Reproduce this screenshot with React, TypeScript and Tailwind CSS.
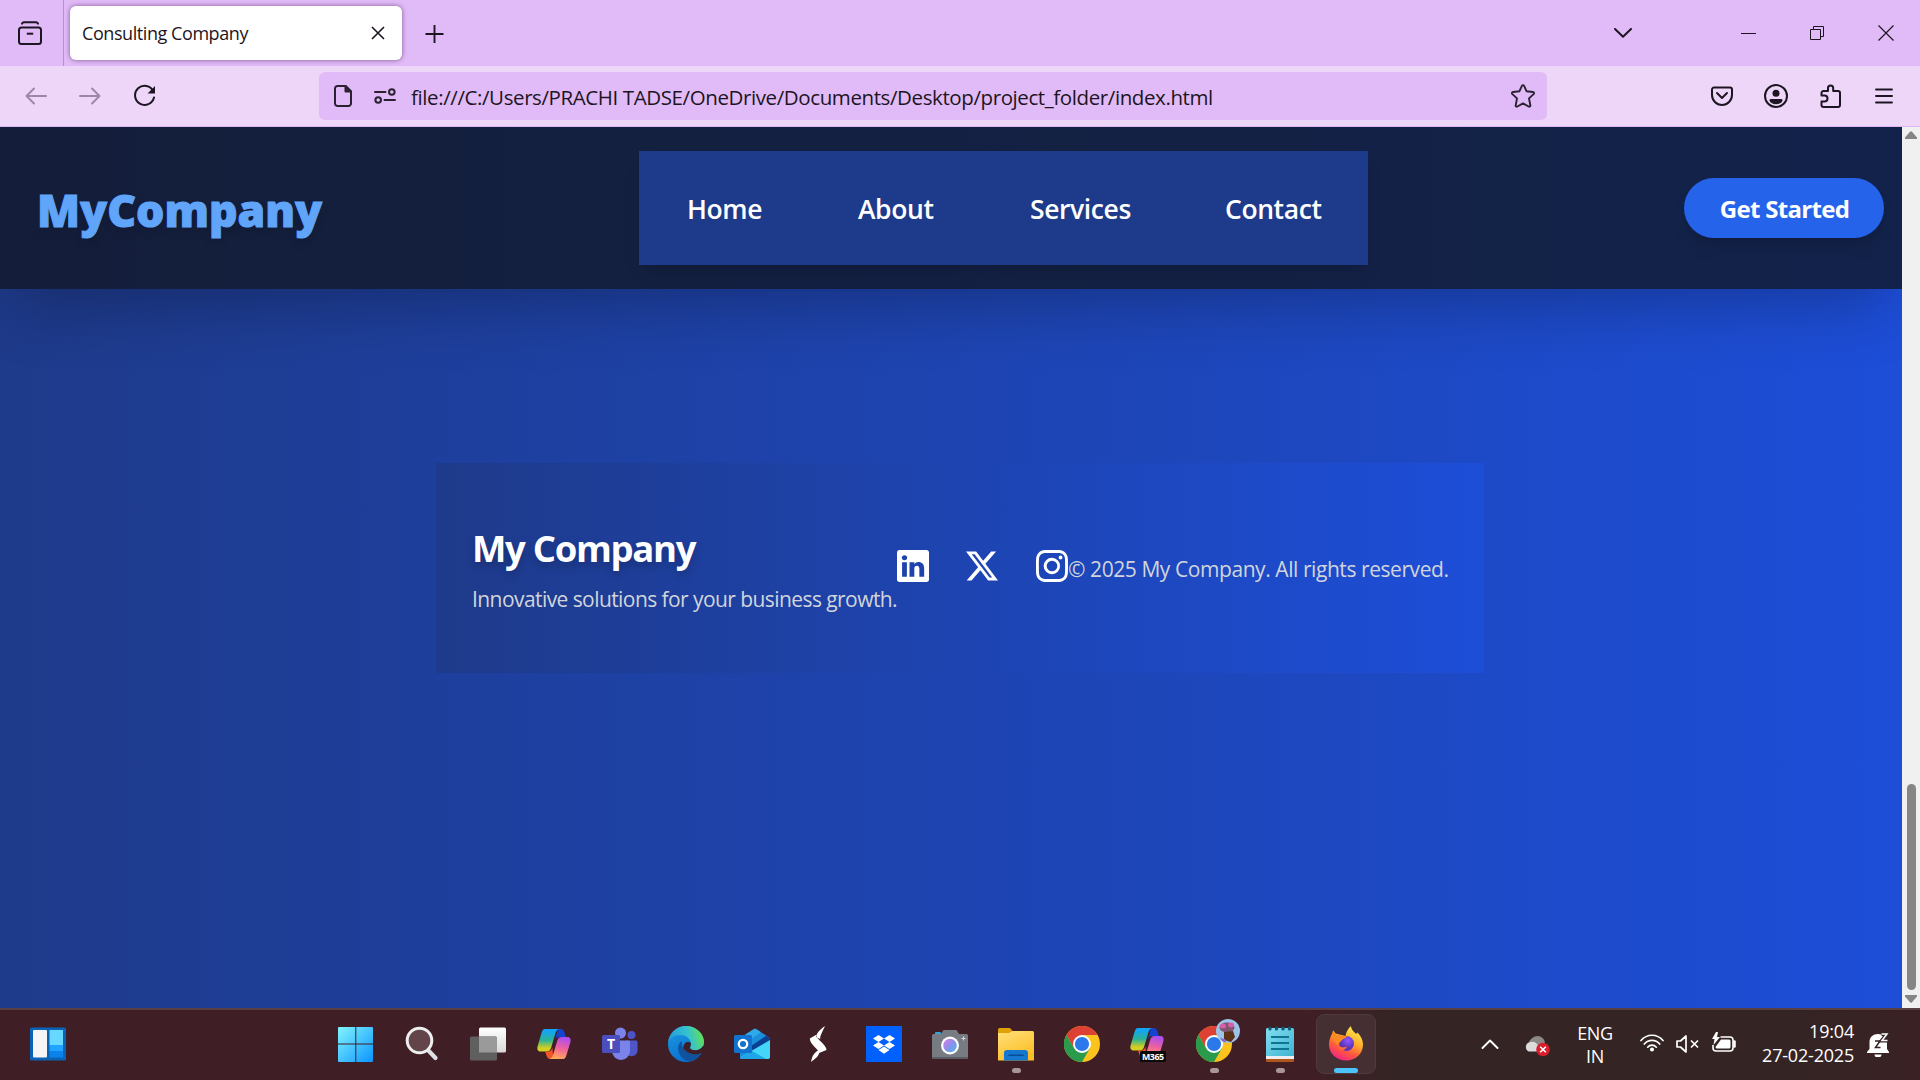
import React from "react";
import { BsLinkedin, BsTwitterX, BsInstagram } from "react-icons/bs";

const INK = "#1d1522";

/* ---------- Browser chrome ---------- */

function TabStrip() {
  return (
    <div className="flex h-[66px] items-center bg-[#e1bbf7] text-[#1d1522]">
      <div className="flex h-full w-16 items-center justify-center border-r border-[#b491c8] pr-[3px]">
        <svg width="24" height="24" viewBox="0 0 24 24" fill="none" stroke={INK} strokeWidth="2" strokeLinecap="round">
          <path d="M4 2.600C4.400 1.600 5 1.300 6 1.300h12c1 0 1.600.3 2 1.300" />
          <rect x="1" y="6.500" width="22" height="16.500" rx="2.500" />
          <path d="M9.800 12.700h4.400" strokeLinecap="square" />
        </svg>
      </div>
      <div className="ml-1.5 flex h-[54px] w-[332px] items-center justify-between rounded-md bg-white pl-3 pr-[17px] shadow-[0_0_5px_rgba(60,20,80,0.6)]">
        <span className="whitespace-nowrap font-['Open_Sans',sans-serif] text-[18px] leading-6 tracking-[-0.43px]">Consulting Company</span>
        <svg width="14" height="14" viewBox="0 0 14 14" stroke={INK} strokeWidth="1.600">
          <path d="M1 1l12 12M13 1L1 13" />
        </svg>
      </div>
      <svg className="ml-[23px] mt-[2px]" width="19" height="18" viewBox="0 0 19 18" stroke={INK} strokeWidth="1.900">
        <path d="M9.500 0v18M.5 9h18" />
      </svg>
      <svg className="ml-auto" width="18" height="10" viewBox="0 0 18 10" fill="none" stroke={INK} strokeWidth="2" strokeLinecap="round" strokeLinejoin="round">
        <path d="M1 1l8 7.800L17 1" />
      </svg>
      <div className="ml-[109px] h-px w-[15px] bg-[#1d1522]" />
      <svg className="ml-[54px]" width="14" height="14" viewBox="0 0 14 14" fill="none" stroke={INK}>
        <path d="M.5 3.500h10v10H.5zM3.500 3.500v-3h10v10h-3" />
      </svg>
      <svg className="ml-[54px] mr-[26px]" width="16" height="16" viewBox="0 0 16 16" stroke={INK} strokeWidth="1.200">
        <path d="M.5 .5l15 15M15.500 .5L.5 15.500" />
      </svg>
    </div>
  );
}

function Toolbar() {
  return (
    <div className="flex h-[61px] items-center border-b border-[#dfb6f5] bg-[#eed6f9]">
      <svg className="ml-[25px]" width="22" height="18" viewBox="0 0 22 18" fill="none" stroke="#9c87a7" strokeWidth="2" strokeLinecap="round" strokeLinejoin="round">
        <path d="M9 1.500L1.500 9 9 16.500M1.500 9H21" />
      </svg>
      <svg className="ml-8" width="22" height="18" viewBox="0 0 22 18" fill="none" stroke="#9c87a7" strokeWidth="2" strokeLinecap="round" strokeLinejoin="round">
        <path d="M13 1.500L20.500 9 13 16.500M20.500 9H1" />
      </svg>
      <svg className="ml-8" width="24" height="24" viewBox="0 0 24 24" fill="none">
        <path d="M20.300 7.200A9.600 9.600 0 1 0 21 13.500" stroke={INK} strokeWidth="2" strokeLinecap="round" />
        <path d="M22 2v7.400h-7.400z" fill={INK} />
      </svg>
      <div className="ml-[162px] flex h-12 w-[1228px] items-center rounded-md bg-[#e1bbf7] pl-[15px] pr-3">
        <svg width="18" height="22" viewBox="0 0 18 22" fill="none" stroke="#2b2131" strokeWidth="2" strokeLinejoin="round">
          <path d="M3.500 1H11.500L17 6.500V18.500a2.500 2.500 0 0 1-2.500 2.500h-11A2.500 2.500 0 0 1 1 18.500v-15A2.500 2.500 0 0 1 3.500 1z" />
          <path d="M11.500 1v5.500H17z" fill="#2b2131" />
        </svg>
        <svg className="ml-[22px]" width="22" height="16" viewBox="0 0 22 16" fill="none" stroke="#2b2131" strokeWidth="2" strokeLinecap="round">
          <path d="M1 4h10.500M10.500 12H21" />
          <circle cx="17.800" cy="4" r="2.800" />
          <circle cx="4.200" cy="12" r="2.800" />
        </svg>
        <span className="ml-[15px] whitespace-nowrap pt-0.5 font-['Open_Sans',sans-serif] text-[20.500px] leading-7 tracking-[-0.4px] text-[#1d1522]">
          file:///C:/Users/PRACHI TADSE/OneDrive/Documents/Desktop/project_folder/index.html
        </span>
        <svg className="ml-auto" width="24" height="24" viewBox="0 0 24 24" fill="none" stroke="#2b2131" strokeWidth="1.900" strokeLinejoin="round">
          <path d="M10.900 1.900c.5-1 1.700-1 2.200 0l2.400 5.300 6.400.8c1.200.2 1.500 1.300.7 2.100l-4.600 4.300 1.300 6.900c.2 1.100-.8 1.700-1.700 1.200L12 19.400l-5.600 3.100c-.9.5-1.900-.1-1.700-1.200L6 14.400 1.400 10.100c-.8-.8-.5-1.900.7-2.100l6.400-.8z" />
        </svg>
      </div>
      <svg className="ml-[164px]" width="22" height="20" viewBox="0 0 22 20" fill="none" stroke={INK} strokeWidth="2" strokeLinecap="round" strokeLinejoin="round">
        <path d="M3 1.500h16a2 2 0 0 1 2 2V9a10 10 0 0 1-20 0V3.500a2 2 0 0 1 2-2z" />
        <path d="M6 7l5 5 5-5" />
      </svg>
      <svg className="ml-[31px]" width="24" height="24" viewBox="0 0 24 24" fill="none">
        <circle cx="12" cy="12" r="11" stroke={INK} strokeWidth="2" />
        <circle cx="12" cy="9.300" r="3.500" fill={INK} />
        <path d="M7 15h10a1.500 1.500 0 0 1 1.500 1.700C17.500 19 15 20.200 12 20.200S6.500 19 5.500 16.700A1.500 1.500 0 0 1 7 15z" fill={INK} />
      </svg>
      <svg className="ml-8" width="22" height="24" viewBox="0 0 22 24" fill="none" stroke={INK} strokeWidth="2" strokeLinejoin="round">
        <path d="M1.500 11.500V9a2 2 0 0 1 2-2H8V4a2.600 2.600 0 0 1 5.200 0v3H18a2 2 0 0 1 2 2v12a2 2 0 0 1-2 2H3.500a2 2 0 0 1-2-2v-3.500h3a3 3 0 0 0 0-6z" />
      </svg>
      <svg className="ml-[33px]" width="18" height="16" viewBox="0 0 18 16" stroke={INK} strokeWidth="1.900" strokeLinecap="round">
        <path d="M1 1.500h16M1 8h16M1 14.500h16" />
      </svg>
    </div>
  );
}

/* ---------- Page ---------- */

function Header() {
  return (
    <header className="flex h-[162px] shrink-0 items-center justify-between bg-[#111827]/80 pl-[37px] pr-[18px] shadow-[0_31px_62px_-15px_rgba(0,0,0,0.25)]">
      <div className="w-[602px] pt-[4px] font-['Noto_Sans',sans-serif] text-[44.500px] font-black leading-none text-[#60a5fa] [-webkit-text-stroke:1px_#60a5fa] [text-shadow:0_5px_8px_rgba(0,0,0,0.15)]">MyCompany</div>
      <nav className="flex h-[114px] w-[729px] items-center gap-24 whitespace-nowrap bg-[#1e3a8a] pl-12 pt-0.5 font-['Open_Sans',sans-serif] text-[26.500px] font-semibold leading-10 tracking-[-0.4px] text-white shadow-[0_12px_19px_-4px_rgba(0,0,0,0.1),0_5px_8px_-5px_rgba(0,0,0,0.1)]">
        <a className="w-[75px]">Home</a>
        <a className="w-[76px]">About</a>
        <a className="w-[99px]">Services</a>
        <a>Contact</a>
      </nav>
      <button className="ml-auto h-[60px] w-[200px] whitespace-nowrap rounded-full bg-[#2563eb] pl-px pt-0.5 font-['Open_Sans',sans-serif] text-[24px] font-bold tracking-[-0.7px] text-white shadow-[0_12px_19px_-4px_rgba(0,0,0,0.1),0_5px_8px_-5px_rgba(0,0,0,0.1)]">Get Started</button>
    </header>
  );
}

function Footer() {
  return (
    <footer className="ml-[436px] mt-[174px] flex h-[210px] w-[1048px] items-center whitespace-nowrap bg-[linear-gradient(to_right,#1e3a8a,#1d4ed8)] px-9 font-['Open_Sans',sans-serif]">
      <div className="w-[425px] pt-1.5">
        <h2 className="text-[36.500px] font-bold leading-[45px] tracking-[-1.3px] text-white [text-shadow:0_5px_8px_rgba(0,0,0,0.2)]">My Company</h2>
        <p className="mt-[11px] text-[21px] leading-[34px] tracking-[-0.57px] text-[#d1d5db]">Innovative solutions for your business growth.</p>
      </div>
      <div className="mb-1 flex gap-[37px] text-[32px] text-white">
        <BsLinkedin />
        <BsTwitterX />
        <BsInstagram className="ml-px" />
      </div>
      <p className="pt-0.5 text-[21px] leading-[34px] tracking-[-0.43px] text-[#d1d5db]">© 2025 My Company. All rights reserved.</p>
    </footer>
  );
}

function ScrollBar() {
  return (
    <div className="flex h-full w-[18px] flex-col items-center bg-[#f0f0f0]">
      <svg className="mt-1" width="12" height="8" viewBox="0 0 12 8"><path d="M5 .8q1-1.200 2 0L12 6.500V8H0V6.500z" fill="#858585" /></svg>
      <div className="mb-[5px] mt-auto h-[206px] w-[9px] rounded-full bg-[#858585]" />
      <svg className="mb-[5px]" width="12" height="8" viewBox="0 0 12 8"><path d="M5 7.200q1 1.200 2 0L12 1.500V0H0V1.500z" fill="#858585" /></svg>
    </div>
  );
}

/* ---------- Taskbar icons, each in a 36px box ---------- */

function Box({ children }: { children: React.ReactNode }) {
  return <svg width="36" height="36" viewBox="0 0 36 36">{children}</svg>;
}

const Widgets = () => (
  <Box>
    <rect y="1.500" width="36" height="33" rx="1.500" fill="#0b63b5" />
    <rect x="3" y="4" width="14" height="27.500" rx="1" fill="#f6f6f6" />
    <rect x="19.500" y="4" width="13.500" height="15" fill="#67d8ff" />
    <rect x="19.500" y="19" width="13.500" height="6" fill="#1fa4ff" />
    <rect x="19.500" y="25" width="13.500" height="6.500" fill="#0a84ea" />
  </Box>
);
const Start = () => (
  <Box>
    <defs><linearGradient id="win" x1="0" y1="0" x2="36" y2="36" gradientUnits="userSpaceOnUse"><stop stopColor="#83f6ff" /><stop offset="1" stopColor="#0a93ff" /></linearGradient></defs>
    <path d="M1 1h16.300v16.500H0V2Q0 1 1 1zM18.300 1H34q1 0 1 1v15.500H18.300zM0 18.500h17.300V36H1Q0 36 0 35zM18.300 18.500H35V35q0 1-1 1H18.300z" fill="url(#win)" />
  </Box>
);
const Search = () => (
  <Box>
    <path d="M23 23l8.500 9" stroke="#dcdfe3" strokeWidth="4.200" strokeLinecap="round" />
    <circle cx="15.500" cy="14.500" r="12.300" fill="#634549" stroke="#eceef0" strokeWidth="3" />
  </Box>
);
const TaskView = () => (
  <Box>
    <defs><linearGradient id="tv" x2="0" y2="1"><stop stopColor="#fff" /><stop offset="1" stopColor="#d8d8d8" /></linearGradient></defs>
    <rect x="9" y="1.500" width="27" height="25" rx="1.500" fill="url(#tv)" />
    <rect y="10.500" width="27" height="24" rx="1.500" fill="#5f5f5f" />
    <path d="M9 10.500h16.500a1.500 1.500 0 0 1 1.500 1.500v14.500H9z" fill="#9a9a9a" />
  </Box>
);
const CopilotShape = () => (
  <>
    <defs>
      <linearGradient id="cpA" x2="0" y2="1"><stop offset=".1" stopColor="#12a5f5" /><stop offset=".5" stopColor="#2cb396" /><stop offset=".85" stopColor="#d4cf20" /></linearGradient>
      <linearGradient id="cpB" x1=".5" x2=".3" y2="1"><stop stopColor="#ab4df0" /><stop offset=".5" stopColor="#f2639a" /><stop offset="1" stopColor="#ffad55" /></linearGradient>
    </defs>
    <path d="M22 3h2.500c2.500 0 3.500 1.800 4.200 4l1.300 4h-7c-2 0-3.200 1-4 3z" fill="#1543cf" />
    <path d="M9 3h14c-2.200.8-3 2.500-3.800 5l-4 13.500c-.8 2.700-2 4-4.700 4H4.500C1.500 25.500.8 23 1.700 20L5.500 7C6.400 4.200 7 3 9 3z" fill="url(#cpA)" />
    <path d="M9 25.500h3c2.500 0 3.700-1.500 4.400-4l.6 7.500c0 2-.3 4-2.500 4-2.700 0-3.500-1.800-4.200-4z" fill="#f4562a" />
    <path d="M27 33H13.500c2.200-.8 3-2.500 3.800-5l4-13.500c.8-2.500 2-3.500 4.700-3.500h5.500c3 0 3.700 2.500 2.800 5.500L30.500 29c-.8 2.800-1.500 4-3.500 4z" fill="url(#cpB)" />
  </>
);
const Copilot = () => <Box><CopilotShape /></Box>;
const Teams = () => (
  <Box>
    <circle cx="29.500" cy="9" r="4" fill="#4d52c4" />
    <circle cx="18.500" cy="7" r="5.500" fill="#7b83eb" />
    <path d="M24 14.500h10q1.500 0 1.500 1.500v8.500a6 6 0 0 1-11.500 2z" fill="#4f56c7" />
    <path d="M11 14.500h15.500q1.500 0 1.500 1.500v9a9 9 0 0 1-18 0z" fill="#7b83eb" />
    <rect y="9" width="18" height="18" rx="1.500" fill="#4a4fbd" />
    <text x="9" y="23.200" textAnchor="middle" fill="#fff" fontSize="14" fontWeight="700" fontFamily="Open Sans">T</text>
  </Box>
);
const Edge = () => (
  <Box>
    <defs>
      <linearGradient id="edA" x2="1" y1=".2"><stop stopColor="#249fd9" /><stop offset=".5" stopColor="#35c1cf" /><stop offset="1" stopColor="#6be83c" /></linearGradient>
      <linearGradient id="edB" x2=".4" y2="1"><stop stopColor="#1b9ee0" /><stop offset="1" stopColor="#0c6fd0" /></linearGradient>
    </defs>
    <circle cx="18" cy="18" r="18" fill="url(#edB)" />
    <path d="M0 17C1 7 9 0 18 0c10.500 0 18 8 18 15.500 0 5.500-4 9-9 9-3.500 0-5.500-1-5.500-2.500 0-1.200 1.500-1.500 1.500-4.500 0-3.500-4-8.500-11-8.500C6 9 1.500 12.500 0 17z" fill="url(#edA)" />
    <path d="M14 15c-3 2-4.500 5.500-3.500 10 1 6 6.500 10.500 12 10.300 4.500-1 8.500-4.300 11-8.300-3 1.500-7 2-11 .6C17 25.800 12.500 21 14 15z" fill="#0f539f" />
    <path d="M33.500 27c-3 1.500-7 2-11 .6-3-1-5.700-2.700-7.200-5.300-.3-3 1.200-5.300 3.200-6.300 3 0 4.500 1.500 3.500 4-1.500 3 .5 4.600 5 4.600 3.500 0 6.500-1.800 8-4.600H38v8z" fill="#401e25" />
    <path d="M20 16c2.500-.2 3.500 1.500 2.500 3.800-.6 1.700-.7 2.900 1 3.800 3 1.500 8.500 1.200 11.500-3.100C32 26 24 27.500 19 24.500c-2.800-2-2.500-6.500 1-8.500z" fill="#401e25" />
  </Box>
);
const Outlook = () => (
  <Box>
    <path d="M6 12L20 3q1-.6 2 0l14 9v18.500a2.500 2.500 0 0 1-2.500 2.500h-25A2.500 2.500 0 0 1 6 30.500z" fill="#1b8fdc" />
    <path d="M8 10.700L20 3q1-.6 2 0l5 3.200L14 15z" fill="#2fa9ea" />
    <path d="M17 20L32.500 9.600 36 12v3L19 27z" fill="#0a3f92" />
    <path d="M36 14v16.500a2.500 2.500 0 0 1-2.500 2.500h-25c-1 0-2-.7-2.300-1.600z" fill="#45d5f8" />
    <path d="M6.200 31.400L18 25l14 8H8.500c-1 0-2-.7-2.300-1.600z" fill="#1ea6e8" />
    <rect y="9" width="18" height="18" rx="1.500" fill="#1173cd" />
    <circle cx="9" cy="18" r="4.200" fill="none" stroke="#fff" strokeWidth="2.300" />
  </Box>
);
const Bolt = () => (
  <Box>
    <path d="M25 0c-5 3.500-8.500 7-8.800 11l4 2C20 9 23 5 25 0zM9.800 12.500l6-3.500 1 1.500c-.4 2 10 9 9.700 13.500L19 27c.5-3-9.500-9-9.200-14.500zM11 36c1-5 2.500-9 7-11.500l1.500 1.500c-.5 4-4.500 7-8.500 10z" fill="#fff" />
  </Box>
);
const Dropbox = () => (
  <Box>
    <rect width="36" height="36" fill="#0061fe" />
    <path d="M12.500 9l5.500 3.500-5.500 3.500L7 12.500zM23.500 9l5.500 3.500-5.500 3.500-5.500-3.500zM12.500 16l5.500 3.500-5.500 3.500L7 19.500zM23.500 16l5.500 3.500-5.500 3.500-5.500-3.500zM12.500 24l5.500-3.500 5.500 3.500-5.500 3.700z" fill="#fff" />
  </Box>
);
const Camera = () => (
  <Box>
    <defs><linearGradient id="lens" x2="1" y2="1"><stop stopColor="#e07bf0" /><stop offset=".5" stopColor="#8b8fe8" /><stop offset="1" stopColor="#45b7ee" /></linearGradient></defs>
    <rect x="3" y="6" width="6" height="4" rx="1" fill="#2fa8dc" />
    <path d="M0 9.500q0-1.500 1.500-1.500H9l2.500-4h13l2.500 4h7.500q1.500 0 1.500 1.500V33H0z" fill="#777b82" />
    <path d="M0 31h36v2H0z" fill="#5a5d63" />
    <circle cx="18" cy="19.500" r="9" fill="#fff" />
    <circle cx="18" cy="19.500" r="6.800" fill="url(#lens)" />
    <path d="M31.500 10.500v4M29.500 12.500h4" stroke="#d8dadd" />
  </Box>
);
const Explorer = () => (
  <Box>
    <defs><linearGradient id="fold" x2=".5" y2="1"><stop stopColor="#ffe07a" /><stop offset="1" stopColor="#fdbf28" /></linearGradient></defs>
    <path d="M0 3.500Q0 2 1.500 2H12l3 3.500L12 9H0z" fill="#e0a008" />
    <path d="M0 7h11l3.500-2H34.500q1.500 0 1.500 1.500V34.500H0z" fill="url(#fold)" />
    <path d="M6 34.500V27q0-3 3-3h18q3 0 3 3v7.500z" fill="#1478d0" />
    <path d="M11 29.300h14" stroke="#0a4d93" strokeWidth="1.500" strokeLinecap="round" />
  </Box>
);
const ChromeShape = () => (
  <>
    <circle cx="18" cy="18" r="18" fill="#fcc31e" />
    <path d="M2.400 9A18 18 0 0 1 33.600 9H18l-7.800 13.500z" fill="#dd4134" />
    <path d="M2.400 9A18 18 0 0 0 18 36l7.800-13.500H10.200z" fill="#2a9a4d" />
    <circle cx="18" cy="18" r="9" fill="#fff" />
    <circle cx="18" cy="18" r="7.100" fill="#2a78ea" />
  </>
);
const Chrome = () => <Box><ChromeShape /></Box>;
const M365 = () => (
  <Box>
    <g transform="translate(-1 -1)"><CopilotShape /></g>
    <rect x="10" y="25" width="26" height="11" rx="1.500" fill="#0a0a0a" />
    <text x="23" y="33.500" textAnchor="middle" fill="#fff" fontSize="8.800" fontWeight="700" fontFamily="Open Sans" textLength="22">M365</text>
  </Box>
);
const ChromeProfile = () => (
  <svg width="36" height="36" viewBox="0 0 36 36" className="overflow-visible">
    <ChromeShape />
    <circle cx="32" cy="5" r="12" fill="#9cc3e8" />
    <ellipse cx="31" cy="1.500" rx="7.500" ry="5" fill="#80556f" />
    <ellipse cx="27" cy="0" rx="3" ry="2.500" fill="#d760a8" />
    <ellipse cx="35" cy="-1" rx="3" ry="2.500" fill="#d760a8" />
    <path d="M28 6l9-1 2 6-4 5-7-2z" fill="#5b3218" />
    <path d="M24 12l5 1 1 3.500q-4-.5-6-4.500z" fill="#8a68c0" />
  </svg>
);
const Notepad = () => (
  <Box>
    <defs><linearGradient id="note" x2="1" y2="1"><stop stopColor="#83dff0" /><stop offset="1" stopColor="#3fb4d2" /></linearGradient></defs>
    <rect x="4" y="28" width="28" height="8" rx="1.200" fill="#b0561a" />
    <rect x="4" y="26" width="28" height="7" fill="#eeeef2" />
    <path d="M4 3.500Q4 2 5.500 2h25Q32 2 32 3.500V30H4z" fill="url(#note)" />
    <path d="M9 11h18M9 17h18M9 23h18" stroke="#0f7392" strokeWidth="1.800" />
    <path d="M8 2v1M14.500 2v1M21 2v1M27.500 2v1" stroke="#0d5a76" strokeWidth="3.200" strokeLinecap="round" />
  </Box>
);
const Firefox = () => (
  <Box>
    <defs>
      <linearGradient id="ffA" x1=".8" x2=".3" y2="1"><stop stopColor="#fff44f" /><stop offset=".4" stopColor="#ffb02e" /><stop offset=".7" stopColor="#ff5a3c" /><stop offset="1" stopColor="#f0228a" /></linearGradient>
      <radialGradient id="ffB" cx=".6" cy=".3"><stop stopColor="#9059ff" /><stop offset="1" stopColor="#5b35b8" /></radialGradient>
    </defs>
    <path d="M17.500 10c1-5 3-8 5.500-10 .3 4 3 5.500 5 8l1.500-1.500C33 10 35 14 35 18.500 35 28 27.500 34.500 18 34.500S1 27.500 1 18.500C1 14 2.500 10 4.500 7l.5-2.500c1 .5 2 2 2.500 3z" fill="url(#ffA)" />
    <circle cx="18.500" cy="17.500" r="7.500" fill="url(#ffB)" />
    <path d="M4.500 7l.5-2.500L8.500 9c2-.3 4 0 5.500 1h5c-.5 2-2.500 2.500-4 3-2 2.500-4 3-4.500 6.500-3-2-6.500-6-6-12.500z" fill="#ff8a22" />
    <path d="M11 20c3 2 6 1.500 8 .2-1 3.800-5.500 5-8 2.800z" fill="#ff6b35" />
  </Box>
);

const APPS: { Icon: () => React.JSX.Element; state?: "open" | "active" }[] = [
  { Icon: Start }, { Icon: Search }, { Icon: TaskView }, { Icon: Copilot }, { Icon: Teams }, { Icon: Edge },
  { Icon: Outlook }, { Icon: Bolt }, { Icon: Dropbox }, { Icon: Camera }, { Icon: Explorer, state: "open" },
  { Icon: Chrome }, { Icon: M365 }, { Icon: ChromeProfile, state: "open" }, { Icon: Notepad, state: "open" },
  { Icon: Firefox, state: "active" },
];

function Taskbar() {
  return (
    <div className="flex h-[72px] items-start whitespace-nowrap border-t-2 border-[#594044] bg-[linear-gradient(to_right,#401e25_0%,#401e25_68%,#342424_73%,#342424_93%,#3a2124_100%)] font-['Open_Sans',sans-serif] text-[18px] leading-6 text-white">
      <div className="ml-[30px] mt-4"><Widgets /></div>
      <div className="ml-[257px] flex">
        {APPS.map(({ Icon, state }, i) => (
          <div key={i} className="flex w-[66px] justify-center pt-1">
            <div className={state === "active" ? "flex h-[60px] w-[60px] flex-col items-center rounded-lg border border-[#4f3b3f] bg-[#452f32] pt-[11px]" : "flex h-[60px] w-[60px] flex-col items-center pt-3"}>
              <Icon />
              {state === "open" && <div className="mt-1.5 h-[5px] w-[9px] rounded-full bg-[#a8969a]" />}
              {state === "active" && <div className="mt-1.5 h-[5px] w-6 rounded-full bg-[#4cc2ff]" />}
            </div>
          </div>
        ))}
      </div>
      <svg className="ml-[102px] mt-[29px]" width="18" height="10" viewBox="0 0 18 10" fill="none" stroke="#fff" strokeWidth="1.900" strokeLinecap="round" strokeLinejoin="round"><path d="M1.500 9L9 1.500 16.500 9" /></svg>
      <svg className="ml-[26px] mt-[25px]" width="25" height="22" viewBox="0 0 25 22">
        <path d="M4 16.500a4.500 4.500 0 0 1-.5-8.500C5 4 9 1 12.500 1c4 0 7 3 7.500 6.500z" fill="#8d8887" />
        <path d="M5 16.500A4.700 4.700 0 0 1 4 7.500c4-1.500 6-.5 8 1.500l5 7.500z" fill="#dcdcdc" />
        <circle cx="18" cy="14.500" r="6.800" fill="#d81e2c" />
        <path d="M15.200 11.700l5.600 5.600M20.800 11.700l-5.600 5.600" stroke="#fff" strokeWidth="1.600" />
      </svg>
      <div className="ml-[27px] mt-3 w-9 text-center leading-[22.500px] tracking-[-0.3px]">
        <div>ENG</div>
        <div>IN</div>
      </div>
      <svg className="ml-[27px] mt-[24px]" width="24" height="18" viewBox="0 0 24 18" fill="none" stroke="#fff" strokeWidth="1.700" strokeLinecap="round">
        <path d="M1 6.500C7-.5 17-.5 23 6.500M4.300 10c4.200-4.800 11.200-4.800 15.400 0M7.700 13.200c2.300-2.700 6.300-2.700 8.600 0" />
        <circle cx="12" cy="15.500" r="1.200" fill="#fff" />
      </svg>
      <svg className="ml-3 mt-[25px]" width="24" height="18" viewBox="0 0 24 18" fill="none" stroke="#fff" strokeWidth="1.700" strokeLinejoin="round">
        <path d="M1 6h3.500L10 1v16l-5.500-5H1z" />
        <path d="M15 5.500l7 7M22 5.500l-7 7" />
      </svg>
      <svg className="ml-3 mt-[22px]" width="25" height="21" viewBox="0 0 25 21" fill="none" stroke="#fff" strokeWidth="1.600">
        <path d="M8.500 5H18a3 3 0 0 1 3 3v8a3 3 0 0 1-3 3H4a3 3 0 0 1-3-3v-3" />
        <path d="M22.500 9.500v5" strokeWidth="2.500" strokeLinecap="round" />
        <path d="M9 7.500h8q1.500 0 1.500 1.500v6q0 1.500-1.500 1.500H5q-1.500 0-1.500-1.500z" fill="#fff" stroke="none" />
        <path d="M4 0L0 7h2.500L1.500 13 8 5H5L6 0z" fill="#fff" stroke="none" />
      </svg>
      <div className="ml-auto mt-[9px] w-[100px] text-right tracking-[-0.2px]">
        <div>19:04</div>
        <div>27-02-2025</div>
      </div>
      <svg className="ml-[13px] mr-[29px] mt-[22px]" width="24" height="25" viewBox="0 0 24 25">
        <path d="M2.500 10C2.500 5 6 2 11 2c5.500 0 9 4 9 9v6l2 3v1H0v-1l2.500-3z" fill="#fff" />
        <path d="M7.500 22.500h7a3.500 3 0 0 1-7 0z" fill="#fff" />
        <path d="M8 9h5L8.500 15.500h5" fill="none" stroke="#342424" strokeWidth="1.500" />
        <path d="M14.500 2h5.500l-5 6.500h5.500" fill="none" stroke="#342424" strokeWidth="4" />
        <path d="M14.500 2h5.500l-5 6.500h5.500" fill="none" stroke="#fff" strokeWidth="1.500" />
      </svg>
    </div>
  );
}

export default function App() {
  return (
    <div className="flex h-[1080px] w-[1920px] flex-col overflow-hidden">
      <TabStrip />
      <Toolbar />
      <div className="flex h-[881px]">
        <main className="flex w-[1902px] flex-col overflow-hidden bg-[linear-gradient(to_right,#1e3a8a,#1d4ed8)]">
          <Header />
          <Footer />
        </main>
        <ScrollBar />
      </div>
      <Taskbar />
    </div>
  );
}
